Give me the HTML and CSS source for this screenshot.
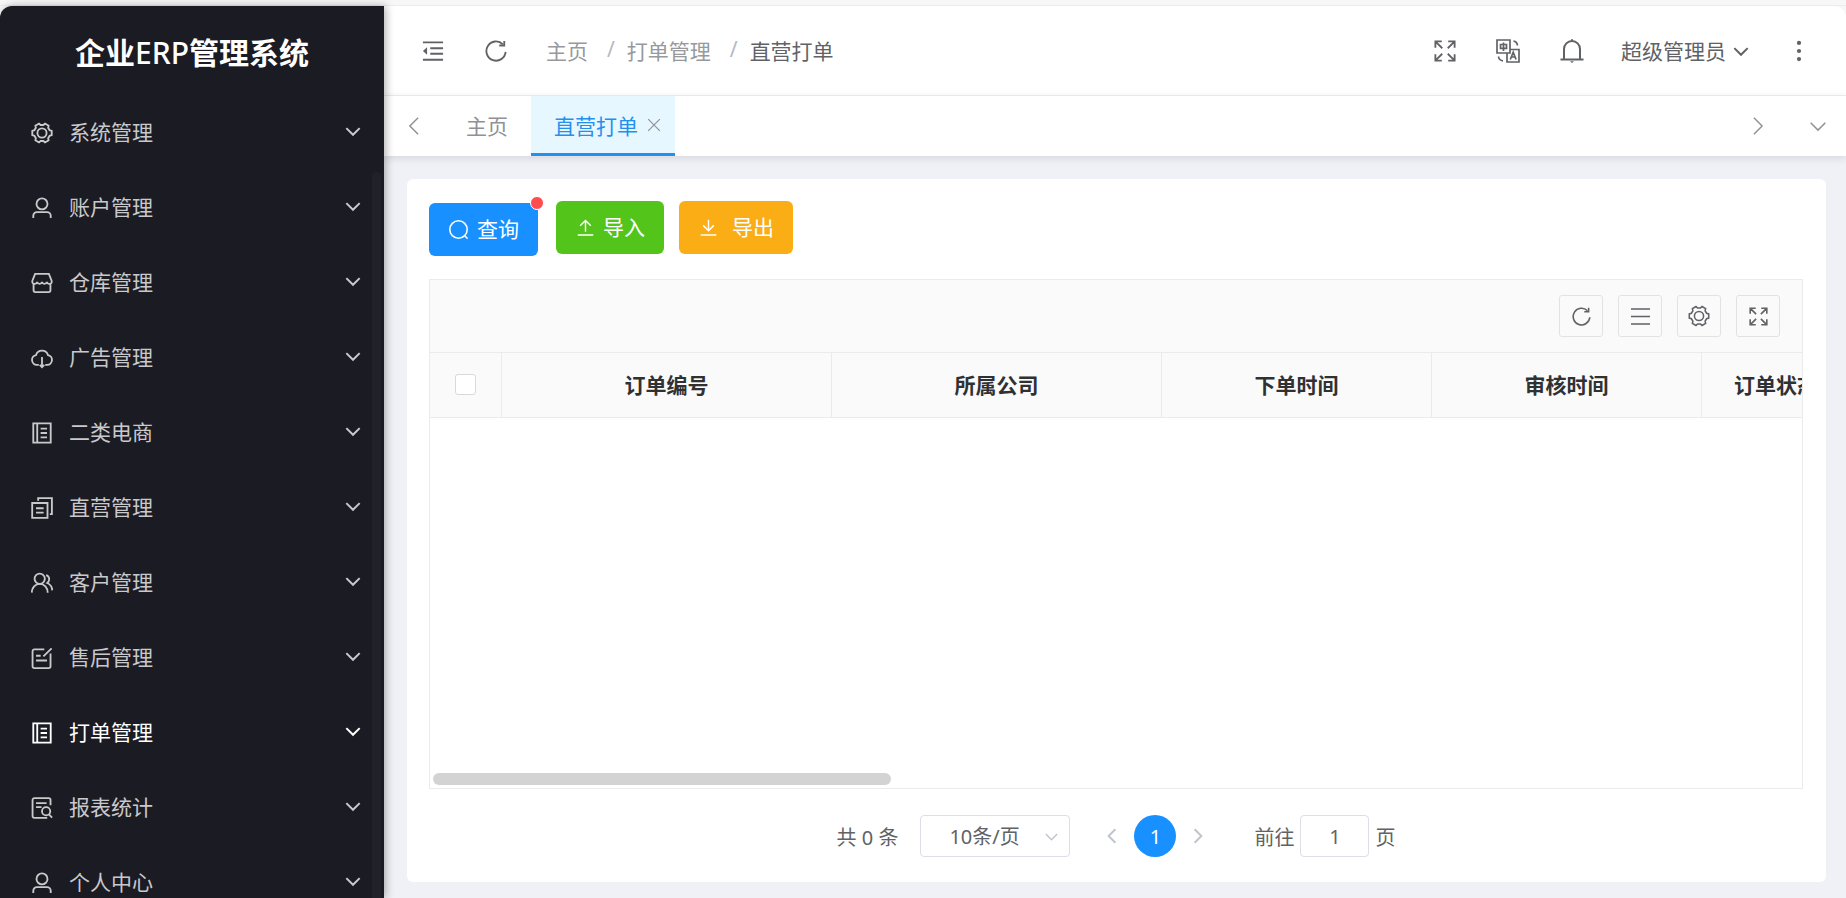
FILE: index.html
```html
<!DOCTYPE html>
<html lang="zh-CN">
<head>
<meta charset="utf-8">
<title>企业ERP管理系统</title>
<link rel="stylesheet" href="styles.css">
</head>
<body>
<svg class="sprite" aria-hidden="true">
  <symbol id="gear" viewBox="0 0 24 24"><path d="M22.6 9.7v4.6l-2.3.7-1.6 2.7.5 2.3-3.9 2.3-1.8-1.6h-3l-1.8 1.6L4.8 20l.5-2.3L3.700 15l-2.300-.7V9.700L3.700 9l1.600-2.700L4.800 4l3.900-2.300 1.800 1.600h3l1.800-1.600L19.200 4l-.5 2.300L20.300 9z"/><circle cx="12" cy="12" r="5"/></symbol>
  <symbol id="user" viewBox="0 0 24 24"><circle cx="12" cy="7.500" r="6"/><path d="M2.500 23v-2.500a4 4 0 0 1 4-4h11a4 4 0 0 1 4 4V23"/></symbol>
  <symbol id="shop" viewBox="0 0 24 24"><path d="M4.500 2h15l3 7.500c.5 2-.5 3.500-2.500 3.500-1.500 0-2.500-1-2.700-2.200-.3 1.200-1.300 2.200-2.600 2.200s-2.400-1-2.700-2.200C11.700 12 10.700 13 9.400 13s-2.400-1-2.700-2.200C6.500 12 5.500 13 4 13c-2 0-3-1.500-2.500-3.500zM2.800 13v7a2 2 0 0 0 2 2h14.400a2 2 0 0 0 2-2v-7"/></symbol>
  <symbol id="cloud" viewBox="0 0 24 24"><path d="M8.500 19.500H6.300a5.400 5.400 0 0 1-.8-10.700 6.800 6.800 0 0 1 13 0 5.400 5.400 0 0 1-.8 10.700h-2.200M12 11v10.500M9.500 19.500l2.500 2.500 2.500-2.500"/></symbol>
  <symbol id="book" viewBox="0 0 24 24"><path d="M2.500 1.500h19v21h-19zM6.800 1.500v21M10.500 7.200h7M10.500 12h7M10.500 16.800h7"/></symbol>
  <symbol id="copy" viewBox="0 0 24 24"><path d="M1.300 6.500H18v16.200H1.300zM7.800 4V1.300h15v17.400h-2.300M5.500 12.300h8.300M5.500 17h8.300"/></symbol>
  <symbol id="users" viewBox="0 0 24 24"><circle cx="9.500" cy="7.300" r="5.600"/><path d="M.8 22.500c.3-5.500 3.700-9.500 8.700-9.500s8.700 4 8.700 9.500M16.500 3.300c3.800 1 4.500 6 1.200 8.700 3 1.300 5.300 4.500 5.500 8"/></symbol>
  <symbol id="edit" viewBox="0 0 24 24"><path d="M14.500 2.500H3.700a2 2 0 0 0-2 2V21a2 2 0 0 0 2 2h15.600a2 2 0 0 0 2-2V7M22.500 1.500l-9 8.800M5.500 9.500h5M5.500 14.700h12"/></symbol>
  <symbol id="report" viewBox="0 0 24 24"><path d="M21.300 9V3.300a2 2 0 0 0-2-2H3.700a2 2 0 0 0-2 2v17.400a2 2 0 0 0 2 2h14M5.500 6.700h11.500M5.500 11h6"/><circle cx="16.500" cy="15.500" r="4.500"/><path d="M19.500 19l3.500 3.500"/></symbol>
  <symbol id="down" viewBox="0 0 24 24"><path d="M4 8.500l8 8 8-8"/></symbol>
  <symbol id="left" viewBox="0 0 24 24"><path d="M16.500 3l-9 9 9 9"/></symbol>
  <symbol id="right" viewBox="0 0 24 24"><path d="M7.500 3l9 9-9 9"/></symbol>
  <symbol id="close" viewBox="0 0 24 24"><path d="M2 2l20 20M22 2L2 22"/></symbol>
  <symbol id="fold" viewBox="0 0 24 24"><path d="M1 2.500h22M9 9h14M9 15h14M1 21.500h22"/><path class="solid" d="M1 12l4.500-4v8z"/></symbol>
  <symbol id="refresh" viewBox="0 0 24 24"><path d="M22.500 13a10.500 10.500 0 1 1-3-8.300"/><path d="M21 1v5h-5.500"/></symbol>
  <symbol id="full" viewBox="0 0 24 24"><path d="M1.500 8.500v-7h7M2 2l7 7M15.500 1.500h7v7M22 2l-7 7M1.500 15.500v7h7M2 22l7-7M15.500 22.500h7v-7M22 22l-7-7"/></symbol>
  <symbol id="lang" viewBox="0 0 24 24"><path d="M1 1h13v13H1zM14 10.500h9V23H11v-9M4.500 5.500h6v3.800h-6zM7.500 3.500v8.500M14.300 20.500l2.900-7.300 2.900 7.300M15.300 18h3.800M17.500 2.200c2.300.3 3.700 1.800 4 4.300M2.500 17.500c.3 2.500 1.700 4 4.500 4.300"/></symbol>
  <symbol id="bell" viewBox="0 0 24 24"><path d="M.5 20.500h23M4 20.500V10a8 8 0 0 1 16 0v10.500M12 .3v2"/><path class="solid" d="M10 22.200h4l-2 1.800z"/></symbol>
  <symbol id="dots" viewBox="0 0 24 24"><g class="solid"><circle cx="12" cy="3.200" r="2.300"/><circle cx="12" cy="12" r="2.300"/><circle cx="12" cy="20.800" r="2.300"/></g></symbol>
  <symbol id="search" viewBox="0 0 24 24"><circle cx="12" cy="12" r="11"/><path d="M19.500 19.500l4 4"/></symbol>
  <symbol id="upload" viewBox="0 0 24 24"><path d="M1 22.500h22M12 18V2M4.500 9.500L12 2l7.500 7.500"/></symbol>
  <symbol id="download" viewBox="0 0 24 24"><path d="M1 22.500h22M12 1v15.500M4.500 9l7.500 7.500L19.500 9"/></symbol>
  <symbol id="lines" viewBox="0 0 24 24"><path d="M0 2.500h24M0 12h24M0 21.500h24"/></symbol>
</svg>

<div class="edge"></div>
<div class="app">
  <aside class="sidebar">
    <h1 class="brand">企业<span class="brand-latin">ERP</span>管理系统</h1>
    <nav class="menu">
      <a class="menu-item" href="#"><svg class="icon"><use href="#gear"/></svg><span>系统管理</span><svg class="arrow"><use href="#down"/></svg></a>
      <a class="menu-item" href="#"><svg class="icon"><use href="#user"/></svg><span>账户管理</span><svg class="arrow"><use href="#down"/></svg></a>
      <a class="menu-item" href="#"><svg class="icon"><use href="#shop"/></svg><span>仓库管理</span><svg class="arrow"><use href="#down"/></svg></a>
      <a class="menu-item" href="#"><svg class="icon"><use href="#cloud"/></svg><span>广告管理</span><svg class="arrow"><use href="#down"/></svg></a>
      <a class="menu-item" href="#"><svg class="icon"><use href="#book"/></svg><span>二类电商</span><svg class="arrow"><use href="#down"/></svg></a>
      <a class="menu-item" href="#"><svg class="icon"><use href="#copy"/></svg><span>直营管理</span><svg class="arrow"><use href="#down"/></svg></a>
      <a class="menu-item" href="#"><svg class="icon"><use href="#users"/></svg><span>客户管理</span><svg class="arrow"><use href="#down"/></svg></a>
      <a class="menu-item" href="#"><svg class="icon"><use href="#edit"/></svg><span>售后管理</span><svg class="arrow"><use href="#down"/></svg></a>
      <a class="menu-item is-active" href="#"><svg class="icon"><use href="#book"/></svg><span>打单管理</span><svg class="arrow"><use href="#down"/></svg></a>
      <a class="menu-item" href="#"><svg class="icon"><use href="#report"/></svg><span>报表统计</span><svg class="arrow"><use href="#down"/></svg></a>
      <a class="menu-item" href="#"><svg class="icon"><use href="#user"/></svg><span>个人中心</span><svg class="arrow"><use href="#down"/></svg></a>
    </nav>
    <div class="menu-scroll"></div>
  </aside>

  <div class="main">
    <header class="header">
      <button class="plain" aria-label="收起菜单"><svg class="icon"><use href="#fold"/></svg></button>
      <button class="plain" aria-label="刷新"><svg class="icon"><use href="#refresh"/></svg></button>
      <nav class="crumbs">
        <a href="#">主页</a><span class="slash">/</span><a href="#">打单管理</a><span class="slash">/</span><span class="current">直营打单</span>
      </nav>
      <div class="tools">
        <button class="plain" aria-label="全屏"><svg class="icon"><use href="#full"/></svg></button>
        <button class="plain" aria-label="语言"><svg class="icon icon-lg thin"><use href="#lang"/></svg></button>
        <button class="plain" aria-label="通知"><svg class="icon icon-lg"><use href="#bell"/></svg></button>
        <button class="plain account"><span>超级管理员</span><svg class="arrow"><use href="#down"/></svg></button>
        <button class="plain" aria-label="更多"><svg class="icon"><use href="#dots"/></svg></button>
      </div>
    </header>

    <div class="tabs">
      <button class="plain tab-nav" aria-label="向左"><svg class="chevron"><use href="#left"/></svg></button>
      <a class="tab" href="#">主页</a>
      <div class="tab is-active"><a href="#">直营打单</a><button class="plain" aria-label="关闭"><svg class="cross"><use href="#close"/></svg></button></div>
      <div class="tab-end">
        <button class="plain" aria-label="向右"><svg class="chevron"><use href="#right"/></svg></button>
        <button class="plain" aria-label="标签菜单"><svg class="chevron"><use href="#down"/></svg></button>
      </div>
    </div>

    <main class="content">
      <section class="card">
        <div class="actions">
          <button class="btn btn-query"><svg class="btn-icon"><use href="#search"/></svg><span>查询</span><i class="dot"></i></button>
          <button class="btn btn-import"><svg class="btn-icon"><use href="#upload"/></svg><span>导入</span></button>
          <button class="btn btn-export"><svg class="btn-icon"><use href="#download"/></svg><span>导出</span></button>
        </div>

        <div class="grid">
          <div class="grid-tools">
            <button class="tool" aria-label="刷新"><svg class="tool-icon"><use href="#refresh"/></svg></button>
            <button class="tool" aria-label="密度"><svg class="tool-icon"><use href="#lines"/></svg></button>
            <button class="tool" aria-label="列设置"><svg class="tool-icon gear"><use href="#gear"/></svg></button>
            <button class="tool" aria-label="全屏"><svg class="tool-icon"><use href="#full"/></svg></button>
          </div>
          <div class="grid-body">
            <table class="table">
              <colgroup><col class="c-check"><col class="c-wide"><col class="c-wide"><col class="c-time"><col class="c-time"><col class="c-status"></colgroup>
              <thead>
                <tr><th><input type="checkbox" class="check" aria-label="全选"></th><th>订单编号</th><th>所属公司</th><th>下单时间</th><th>审核时间</th><th>订单状态</th></tr>
              </thead>
            </table>
          </div>
          <div class="thumb"></div>
        </div>

        <div class="pager">
          <span>共 0 条</span>
          <span class="size-box"><select class="size" aria-label="每页条数"><option>10条/页</option></select><svg class="size-arrow"><use href="#down"/></svg></span>
          <button class="plain step" aria-label="上一页"><svg class="step-icon"><use href="#left"/></svg></button>
          <button class="page-no">1</button>
          <button class="plain step" aria-label="下一页"><svg class="step-icon"><use href="#right"/></svg></button>
          <label class="jump">前往<input class="jump-input" type="text" value="1">页</label>
        </div>
      </section>
    </main>
  </div>
</div>
</body>
</html>
```

FILE: styles.css
```css
* { box-sizing: border-box; }

body {
  margin: 0;
  height: 100vh;
  display: flex;
  flex-direction: column;
  overflow: hidden;
  background: #f7f7f7;
  color: #606266;
  font-family: "Noto Sans", "Noto Sans CJK SC", sans-serif;
  font-size: 21px;
  font-weight: 400;
}

a { color: inherit; text-decoration: none; }
button, input, select { font: inherit; color: inherit; }
svg { display: block; fill: none; stroke: currentColor; stroke-width: 2; flex: none; }
.sprite { position: absolute; width: 0; height: 0; }
.solid { fill: currentColor; stroke: none; }
.icon { width: 22px; height: 22px; }
.icon-lg { width: 24px; height: 24px; }
.thin { stroke-width: 1.7; }
.arrow { width: 20px; height: 20px; stroke-width: 2.4; }

.plain {
  display: flex;
  align-items: center;
  padding: 0;
  border: 0;
  background: none;
}

.edge { height: 6px; flex: none; border-bottom: 1px solid #ececec; }
.app { flex: 1; min-height: 0; display: flex; }

.sidebar {
  position: relative;
  z-index: 2;
  width: 384px;
  flex: none;
  overflow: hidden;
  border-top-left-radius: 12px;
  background: #1b1b24;
  color: #c9c9cb;
  box-shadow: 2px 0 8px rgba(0, 0, 0, .3);
}
.brand {
  margin: 0;
  height: 89px;
  line-height: 93px;
  overflow: hidden;
  text-align: center;
  font-size: 30px;
  font-weight: 700;
  color: #fff;
}
.brand-latin { font-weight: 500; }
.menu-item {
  display: flex;
  align-items: center;
  height: 75px;
  padding: 0 21px 0 31px;
}
.menu-item span { flex: 1; margin-left: 16px; padding-bottom: 4px; }
.menu-item .arrow { margin-bottom: 3px; }
.menu-item.is-active { color: #fff; }
.menu-scroll {
  position: absolute;
  top: 166px;
  right: 3px;
  bottom: 0;
  width: 9px;
  border-radius: 4px 4px 0 0;
  background: #21212a;
}

.main { flex: 1; min-width: 0; display: flex; flex-direction: column; background: #f0f1f6; border-top-right-radius: 12px; }

.header {
  display: flex;
  align-items: center;
  height: 90px;
  padding: 0 36px 0 38px;
  gap: 41px;
  background: #fff;
  border-bottom: 1px solid #f0f0f0;
  border-top-right-radius: 12px;
}
.crumbs { display: flex; color: #97999d; margin-left: -2px; padding-bottom: 2px; }
.slash { margin: 0 12px 0 19px; color: #b5b9c2; }
.current { color: #606266; }
.tools { margin-left: auto; display: flex; align-items: center; gap: 40px; }
.account { gap: 5px; margin-left: -3px; }
.account span { padding-bottom: 2px; }
.account + .plain { margin-left: -3px; }

.tabs {
  position: relative;
  z-index: 1;
  display: flex;
  height: 60px;
  background: #fff;
  color: #8f9195;
  box-shadow: 0 2px 8px rgba(0, 21, 41, .12);
}
.tab-nav { width: 59px; justify-content: center; }
.chevron { width: 22px; height: 22px; stroke-width: 1.6; }
.tab { display: flex; align-items: center; gap: 9px; padding: 0 23px 2px; }
.tab.is-active { padding: 1px 14px 0 23px; border-bottom: 3px solid #2490ee; background: #e6f7ff; color: #2490ee; }
.tab .plain { color: #8f9195; }
.cross { width: 14px; height: 14px; }
.tab-end { margin-left: auto; display: flex; gap: 38px; padding-right: 17px; }

.content { flex: 1; min-height: 0; display: flex; padding: 23px 20px 16px 23px; }
.card {
  flex: 1;
  min-width: 0;
  display: flex;
  flex-direction: column;
  padding: 22px 23px 25px 22px;
  border-radius: 6px;
  background: #fff;
}

.actions { display: flex; height: 78px; align-items: flex-start; }
.btn {
  position: relative;
  display: flex;
  align-items: center;
  height: 53px;
  padding: 0 19px;
  gap: 9px;
  border: 0;
  border-radius: 6px;
  color: #fff;
}
.btn span { padding-bottom: 3px; }
.btn-icon { width: 19px; height: 19px; }
.btn-query { margin: 2px 18px 0 0; padding-left: 20px; background: #1890ff; }
.btn-import { margin-right: 15px; background: #52c41a; }
.btn-export { gap: 15px; background: #faad14; }
.btn-import .btn-icon, .btn-export .btn-icon { width: 17px; height: 17px; margin-left: 2px; }
.dot {
  position: absolute;
  top: -7px;
  right: -6px;
  width: 14px;
  height: 14px;
  border: 1px solid #fff;
  border-radius: 50%;
  background: #ff4d4f;
}

.grid {
  flex: 1;
  min-height: 0;
  position: relative;
  display: flex;
  flex-direction: column;
  border: 1px solid #ebebeb;
}
.grid-tools {
  display: flex;
  justify-content: flex-end;
  gap: 15px;
  height: 73px;
  padding: 15px 22px;
  background: #fafafa;
  border-bottom: 1px solid #ebebeb;
}
.tool {
  display: flex;
  align-items: center;
  justify-content: center;
  width: 44px;
  height: 42px;
  padding: 0;
  border: 1px solid #e2e2e2;
  border-radius: 3px;
  background: #fafafa;
}
.tool-icon { width: 19px; height: 19px; }
.tool-icon.gear { width: 22px; height: 22px; stroke-width: 1.7; }
.grid-body { flex: 1; overflow: hidden; }
.table { width: 1421px; table-layout: fixed; border-collapse: separate; border-spacing: 0; }
.c-check { width: 72px; }
.c-wide { width: 330px; }
.c-time { width: 270px; }
.c-status { width: 149px; }
.table th {
  height: 65px;
  padding: 0 0 2px;
  border: solid #ebebeb;
  border-width: 0 1px 1px 0;
  background: #fafafa;
  color: #303133;
  font-weight: 700;
}
.check {
  appearance: none;
  display: block;
  width: 21px;
  height: 21px;
  margin: 0 auto;
  border: 1px solid #d9d9d9;
  border-radius: 3px;
  background: #fff;
}
.thumb {
  position: absolute;
  left: 3px;
  bottom: 3px;
  width: 33.4%;
  height: 12px;
  border-radius: 6px;
  background: #d3d3d3;
}

.pager {
  display: flex;
  justify-content: center;
  align-items: center;
  margin-top: 26px;
  height: 42px;
  font-size: 20px;
}
.size-box { position: relative; margin: 0 30px 0 22px; }
.size {
  appearance: none;
  display: block;
  width: 150px;
  height: 42px;
  padding: 0 40px 0 28px;
  border: 1px solid #dcdfe6;
  border-radius: 4px;
  background: #fff;
}
.size-arrow { position: absolute; top: 13px; right: 10px; width: 17px; height: 17px; color: #c0c4cc; }
.step { width: 24px; justify-content: center; color: #c0c4cc; }
.step-icon { width: 18px; height: 18px; stroke-width: 2.6; }
.page-no {
  width: 42px;
  height: 42px;
  margin: 0 10px;
  padding: 0;
  border: 0;
  border-radius: 50%;
  background: #1890ff;
  color: #fff;
}
.jump { display: flex; align-items: center; gap: 6px; margin-left: 44px; }
.jump-input {
  width: 69px;
  height: 42px;
  padding: 0;
  border: 1px solid #dcdfe6;
  border-radius: 4px;
  text-align: center;
}
```
